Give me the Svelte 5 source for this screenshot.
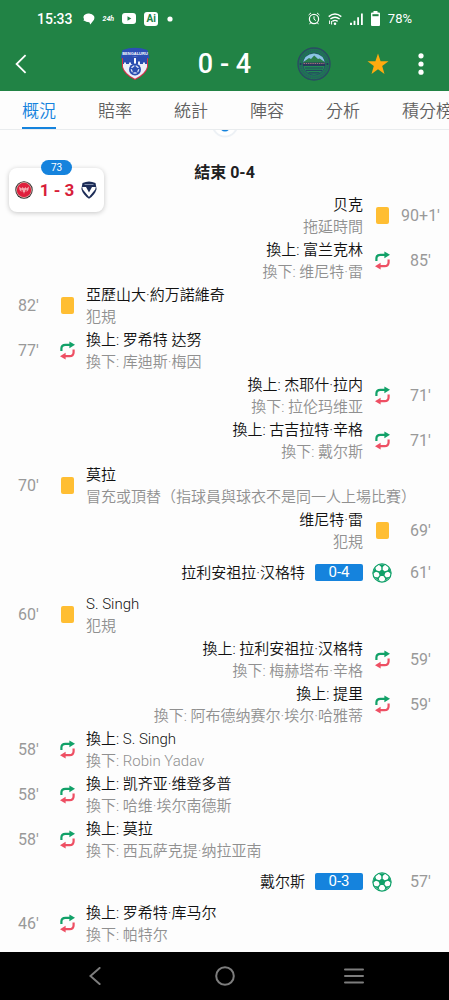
<script lang="ts">
	type EventKind = 'card' | 'sub' | 'goal';

	interface MatchEvent {
		side: 'home' | 'away';
		kind: EventKind;
		time: string;
		title: string;
		detail?: string;
		score?: string;
	}

	const tabs = ['概況', '賠率', '統計', '陣容', '分析', '積分榜'];
	let activeTab = $state('概況');
	let starred = $state(true);

	// newest first
	const events: MatchEvent[] = [
		{side: 'away', kind: 'card', time: "90+1'", title: '贝克', detail: '拖延時間'},
		{side: 'away', kind: 'sub', time: "85'", title: '換上: 富兰克林', detail: '換下: 维尼特·雷'},
		{side: 'home', kind: 'card', time: "82'", title: '亞歷山大·約万諾維奇', detail: '犯規'},
		{side: 'home', kind: 'sub', time: "77'", title: '換上: 罗希特 达努', detail: '換下: 库迪斯·梅因'},
		{side: 'away', kind: 'sub', time: "71'", title: '換上: 杰耶什·拉内', detail: '換下: 拉伦玛维亚'},
		{side: 'away', kind: 'sub', time: "71'", title: '換上: 古吉拉特·辛格', detail: '換下: 戴尔斯'},
		{
			side: 'home',
			kind: 'card',
			time: "70'",
			title: '莫拉',
			detail: '冒充或頂替（指球員與球衣不是同一人上場比賽）',
		},
		{side: 'away', kind: 'card', time: "69'", title: '维尼特·雷', detail: '犯規'},
		{side: 'away', kind: 'goal', time: "61'", title: '拉利安祖拉·汉格特', score: '0-4'},
		{side: 'home', kind: 'card', time: "60'", title: 'S. Singh', detail: '犯規'},
		{side: 'away', kind: 'sub', time: "59'", title: '換上: 拉利安祖拉·汉格特', detail: '換下: 梅赫塔布·辛格'},
		{side: 'away', kind: 'sub', time: "59'", title: '換上: 提里', detail: '換下: 阿布德纳赛尔·埃尔·哈雅蒂'},
		{side: 'home', kind: 'sub', time: "58'", title: '換上: S. Singh', detail: '換下: Robin Yadav'},
		{side: 'home', kind: 'sub', time: "58'", title: '換上: 凯齐亚·维登多普', detail: '換下: 哈维·埃尔南德斯'},
		{side: 'home', kind: 'sub', time: "58'", title: '換上: 莫拉', detail: '換下: 西瓦萨克提·纳拉亚南'},
		{side: 'away', kind: 'goal', time: "57'", title: '戴尔斯', score: '0-3'},
		{side: 'home', kind: 'sub', time: "46'", title: '換上: 罗希特·库马尔', detail: '換下: 帕特尔'},
	];
</script>

{#snippet eventIcon(kind: EventKind)}
	{#if kind === 'card'}
		<svg width="13" height="17" viewBox="0 0 13 17"><rect width="13" height="17" rx="2" fill="#ffbe33" /></svg>
	{:else if kind === 'sub'}
		<svg width="15" height="19" viewBox="0 0 15 19">
			<path d="M1.4 10V7.6Q1.4 3.8 5.4 3.8H10" fill="none" stroke="#12a168" stroke-width="2.2" />
			<path d="M9.4 .4L15 3.7L9.4 7.2Z" fill="#12a168" />
			<path d="M13.6 8.6V11.2Q13.6 15.1 9.6 15.1H5" fill="none" stroke="#ee4f63" stroke-width="2.2" />
			<path d="M5.6 11.7L0 15.2L5.6 18.6Z" fill="#ee4f63" />
		</svg>
	{:else}
		<svg width="20" height="20" viewBox="0 0 20 20">
			<circle cx="10" cy="10" r="9.1" fill="#fff" stroke="#0fa069" stroke-width="1.2" />
			<path
				d="M10 6.8V3M13 9L17 7.7M11.9 12.6L14.3 15.9M8.1 12.6L5.7 15.9M7 9L3 7.7"
				stroke="#0fa069"
				stroke-width="1.4"
			/>
			<g fill="#0fa069">
				<path d="M10 6.3L13.6 8.9L12.2 13.1H7.8L6.4 8.9Z" />
				<path d="M6.4 1.4H13.6L10 4.6Z" />
				<path d="M17 4L19.4 11L15.4 8.2Z" />
				<path d="M18.2 13.8L12 18.8L13.8 14.6Z" />
				<path d="M1.8 13.8L8 18.8L6.2 14.6Z" />
				<path d="M3 4L.6 11L4.6 8.2Z" />
			</g>
		</svg>
	{/if}
{/snippet}

<div class="page">
	<header>
		<div class="status">
			<div class="status-group">
				<span class="clock">15:33</span>
				<svg width="14" height="12" viewBox="-2 0 14 12">
					<path
						d="M5 .5Q9 0 11 3Q12.2 6 9.8 8.2L7.3 11.5L6.3 9.2Q2.5 9.2 1.8 7.8L.6 8L1 6Q-.8 2.4 3 .9Z"
						fill="#fff"
					/>
				</svg>
				<span class="tiny">24h</span>
				<svg width="14" height="11" viewBox="0 0 14 11">
					<rect width="14" height="11" rx="3" fill="#fff" />
					<path d="M5.5 3.2L9.3 5.5L5.5 7.8Z" fill="#218345" />
				</svg>
				<span class="ai">Ai</span>
				<svg width="8" height="6" viewBox="0 0 8 6"><circle cx="4" cy="3" r="2.6" fill="#fff" /></svg>
			</div>
			<div class="status-group right">
				<svg width="12" height="13" viewBox="0 0 12 13" fill="none" stroke="#fff">
					<circle cx="6" cy="7" r="4.6" stroke-width="1.2" />
					<path d="M6 4.2V7.2L7.8 8.6M.6 3L3 .9M11.4 3L9 .9M2.7 10.6L1.6 12.2M9.3 10.6L10.4 12.2" />
				</svg>
				<svg width="14" height="12" viewBox="0 0 14 12" fill="none" stroke="#fff" stroke-width="1.4">
					<path d="M.7 3.6Q7-1.6 13.3 3.6M2.4 6Q7 2.4 11.6 6M4.4 8.4Q7 6.4 9.6 8.4" />
					<circle cx="7" cy="10.7" r=".6" fill="#fff" />
					<path d="M1.6 7.5V11M3.6 8V11.5" stroke-width="1" />
				</svg>
				<svg width="13" height="12" viewBox="0 0 13 12" fill="#fff">
					<path d="M0 9.8H2V12H0ZM3.6 7.8H5.4V12H3.6ZM7.2 4.2H9V12H7.2ZM11 .4H12.8V12H11Z" />
				</svg>
				<svg width="9" height="15" viewBox="0 0 9 15">
					<path d="M2.5 0H6.5V1.6H8Q9 1.6 9 2.6V14Q9 15 8 15H1Q0 15 0 14V2.6Q0 1.6 1 1.6H2.5Z" fill="#fff" />
					<path d="M1.4 3.2H7.6V5.2H1.4Z" fill="#218345" />
				</svg>
				<span>78%</span>
			</div>
		</div>

		<div class="toolbar">
			<button class="back" aria-label="返回">
				<svg width="12" height="20" viewBox="0 0 12 20">
					<path d="M10.6 1.2L1.6 10L10.6 18.8" fill="none" stroke="#fff" stroke-width="1.8" />
				</svg>
			</button>
			<div class="match">
				<svg width="34" height="34" viewBox="0 0 34 34">
					<path d="M4 8H30V20Q28 28 17 33Q6 28 4 20Z" fill="#d8304a" />
					<path d="M5 8H29V20Q27 27 17 31.8Q7 27 5 20Z" fill="#eceffa" />
					<path
						d="M5 10H29V17H27V15.5H25V17H22V14.5H20V17H18V11H16V17H13V15.5H11V17H8V15.5H6V17H5Z"
						fill="#2b4db0"
					/>
					<path d="M4.5 3Q17-1.5 29.5 3L31.5 11.5Q17 8 2.5 11.5Z" fill="#2c4fb5" />
					<path d="M16.2 11.5H17.8V18H16.2Z" fill="#fff" />
					<circle cx="17" cy="22.5" r="6" fill="#2b4db0" />
					<circle cx="17" cy="22.5" r="4.2" fill="#d9e1f6" />
					<path
						d="M17 19.8L19.6 21.7L18.6 24.7H15.4L14.4 21.7ZM17 17V20M12 21L14.5 22M22 21L19.5 22M14 27L15.5 24.5M20 27L18.5 24.5"
						fill="#2b4db0"
						stroke="#2b4db0"
						stroke-width="1.2"
					/>
					<text x="17" y="8" text-anchor="middle" class="crest-text">BENGALURU</text>
				</svg>
				<h1>0 - 4</h1>
				<svg width="34" height="34" viewBox="0 0 34 34">
					<circle cx="17" cy="17" r="16" fill="#1d7a50" stroke="#2a4c63" stroke-width="1.4" />
					<circle cx="17" cy="17" r="13.6" fill="none" stroke="#2b5968" stroke-width="1.6" stroke-dasharray="1.2 1" />
					<circle cx="17" cy="17" r="11.2" fill="#238a55" stroke="#27506a" />
					<path d="M6 17Q7 7.2 17 6.4Q27 7.2 28 17Z" fill="#8cc3e6" />
					<path d="M6.4 15L12 11L14 12L17.2 8.6L21 12L22.8 11.4L27.6 15V17H6.4Z" fill="#2c7d4b" />
					<path d="M6 15.5H28V19H6Z" fill="#28395c" />
					<path d="M6.6 16.5H27.4" stroke="#a66f7b" stroke-dasharray="1.4 .8" />
					<path d="M8 21H26M9 23.4H25M11.5 25.8H22.5" stroke="#22475f" stroke-width="1.2" />
					<circle cx="3.6" cy="17" r="1" fill="#25355c" />
					<circle cx="30.4" cy="17" r="1" fill="#25355c" />
				</svg>
			</div>
			<div class="actions">
				<button aria-label="收藏" aria-pressed={starred} onclick={() => (starred = !starred)}>
					<svg width="22" height="22" viewBox="0 0 22 22">
						<path
							d="M11 .5L13.6 8.2H21.5L15.2 13L17.5 21L11 16.2L4.5 21L6.8 13L.5 8.2H8.4Z"
							fill={starred ? '#ffab0f' : '#fff'}
						/>
					</svg>
				</button>
				<button aria-label="更多">
					<svg width="6" height="22" viewBox="0 0 6 22" fill="#fff">
						<circle cx="3" cy="2.8" r="2.6" />
						<circle cx="3" cy="11" r="2.6" />
						<circle cx="3" cy="19.2" r="2.6" />
					</svg>
				</button>
			</div>
		</div>
	</header>

	<nav class="tabs">
		{#each tabs as tab}
			<button class:active={tab === activeTab} onclick={() => (activeTab = tab)}>{tab}</button>
		{/each}
	</nav>

	<main>
		<!-- scrolled mostly under the tabs -->
		<svg class="marker" width="30" height="8" viewBox="0 0 30 8">
			<circle cx="15" cy="-6" r="12.5" fill="#fff" stroke="#edf1f5" stroke-width="2" />
			<circle cx="15" cy="-4" r="5.5" fill="#1583dd" />
		</svg>

		<aside class="live-card">
			<span class="minute">73</span>
			<svg width="18" height="18" viewBox="0 0 18 18">
				<circle cx="9" cy="9" r="8.7" fill="#2b2527" />
				<circle cx="9" cy="9" r="7.9" fill="#d6b9ae" />
				<circle cx="9" cy="9" r="7.2" fill="#df1f3d" />
				<path
					d="M4 5.5L6.5 7.5L7.5 6L9 7.5L10.5 6L11.5 7.5L14 5.5Q14 9 12 10.5L10.5 10L9 13L7.5 10L6 10.5Q4 9 4 5.5Z"
					fill="#f3a6ad"
				/>
				<path d="M6 9L8 10M12 9L10 10M7.5 12H10.5" stroke="#df1f3d" stroke-width=".8" />
			</svg>
			<strong>1 - 3</strong>
			<svg width="16" height="18" viewBox="0 0 16 18">
				<path d="M1.5 2Q8-1 14.5 2L15.6 8Q14 14 8 17.8Q2 14 .4 8Z" fill="#1c2c57" />
				<path d="M1.2 6H5L8 11.5L11 6H14.8L14.2 8.6L8 16L1.8 8.6Z" fill="#fff" />
				<path d="M3.5 3.5H12.5" stroke="#8390ad" />
			</svg>
		</aside>

		<h2>結束 0-4</h2>

		<ul>
			{#each events as event}
				<li class={[event.side, event.kind]}>
					<span class="time">{event.time}</span>
					<span class="icon">{@render eventIcon(event.kind)}</span>
					<div class="text">
						<span class="title">{event.title}</span>
						{#if event.score}
							<span class="score">{event.score}</span>
						{/if}
						{#if event.detail}
							<span class="detail">{event.detail}</span>
						{/if}
					</div>
				</li>
			{/each}
		</ul>
	</main>

	<footer>
		<button aria-label="上一頁">
			<svg width="12" height="18" viewBox="0 0 12 18">
				<path d="M10.6 1L1.4 9L10.6 17" fill="none" stroke="#7d7d7d" stroke-width="2" stroke-linecap="round" />
			</svg>
		</button>
		<button aria-label="主畫面">
			<svg width="20" height="20" viewBox="0 0 20 20">
				<circle cx="10" cy="10" r="8.8" fill="none" stroke="#7d7d7d" stroke-width="2" />
			</svg>
		</button>
		<button aria-label="最近使用">
			<svg width="20" height="16" viewBox="0 0 20 16">
				<path d="M1 1.5H19M1 8H19M1 14.5H19" stroke="#7d7d7d" stroke-width="2" stroke-linecap="round" />
			</svg>
		</button>
	</footer>
</div>

<style>
	:global(body) {
		margin: 0;
		background: #fdfdfd;
	}
	.page {
		min-height: 100vh;
		display: flex;
		flex-direction: column;
		font-family: Roboto, 'Noto Sans CJK TC', 'Noto Sans CJK SC', sans-serif;
		font-size: 15px;
		color: #202020;
		overflow: hidden;
	}
	svg {
		display: block;
		flex: none;
	}
	button {
		padding: 0;
		border: 0;
		background: none;
		color: inherit;
		font: inherit;
		cursor: pointer;
	}

	header {
		background: #218345;
		color: #fff;
	}
	.status {
		height: 37px;
		padding: 0 37px;
		display: flex;
		align-items: center;
		justify-content: space-between;
		font-size: 13px;
	}
	.status-group {
		display: flex;
		align-items: center;
		gap: 8px;
	}
	.clock {
		font-size: 14px;
		font-weight: 500;
	}
	.tiny {
		font-size: 7px;
		font-weight: 700;
		font-style: italic;
	}
	.ai {
		width: 14px;
		border-radius: 3px;
		background: #fff;
		color: #218345;
		font-size: 10px;
		font-weight: 700;
		line-height: 14px;
		text-align: center;
	}
	.toolbar {
		height: 54px;
		display: grid;
		grid-template-columns: 1fr 214px 1fr;
		align-items: center;
	}
	.back {
		justify-self: start;
		padding: 0 15px;
	}
	.match {
		display: flex;
		align-items: center;
		justify-content: space-between;
	}
	.crest-text {
		font: bold 4px 'Liberation Sans', sans-serif;
		fill: #fff;
	}
	h1 {
		margin: 0;
		font-size: 27px;
		font-weight: 500;
	}
	.actions {
		display: flex;
		justify-content: flex-end;
		gap: 29px;
		padding-right: 25px;
	}

	.tabs {
		height: 38px;
		display: flex;
		gap: 42px;
		padding-left: 22px;
		border-bottom: 1px solid #e9ecee;
		overflow: hidden;
	}
	.tabs button {
		flex: none;
		border-bottom: 2px solid transparent;
		font-size: 17px;
		font-weight: 350;
		color: #606060;
	}
	.tabs .active {
		border-color: #1583dd;
		color: #1583dd;
	}

	main {
		flex: 1;
		position: relative;
	}
	.marker {
		margin: 0 auto;
	}
	.live-card {
		position: absolute;
		top: 38px;
		left: 9px;
		width: 95px;
		height: 44px;
		box-sizing: border-box;
		padding: 0 7px 0 6px;
		display: flex;
		align-items: center;
		justify-content: space-between;
		border-radius: 8px;
		background: #fff;
		box-shadow: 0 1px 5px rgba(0, 0, 0, 0.22);
	}
	.live-card strong {
		font-size: 17px;
		color: #d81e3a;
	}
	.minute {
		position: absolute;
		top: -8px;
		left: 32px;
		width: 31px;
		border-radius: 8px;
		background: #1583dd;
		color: #fff;
		font-size: 10px;
		line-height: 15px;
		text-align: center;
	}
	h2 {
		margin: 24px 0 9px;
		font-size: 16px;
		font-weight: 700;
		line-height: 22px;
		text-align: center;
	}

	ul {
		margin: 0;
		padding: 0;
		list-style: none;
	}
	li {
		min-height: 45px;
		display: flex;
		align-items: center;
	}
	li.away {
		flex-direction: row-reverse;
	}
	li.goal {
		min-height: 39px;
	}
	.time {
		flex: none;
		width: 57px;
		font-size: 16px;
		color: #999;
		text-align: center;
	}
	.icon {
		flex: none;
		width: 20px;
		display: flex;
		justify-content: center;
	}
	.text {
		display: flex;
		flex-direction: column;
		margin: 0 9px;
		font-weight: 350;
		line-height: 22px;
	}
	.away .text {
		text-align: right;
	}
	.goal .text {
		flex-direction: row;
		align-items: center;
		gap: 10px;
	}
	.title {
		color: #111;
	}
	.detail {
		color: #909090;
	}
	.score {
		width: 48px;
		border-radius: 2px;
		background: #1583dd;
		color: #fff;
		font-weight: 400;
		line-height: 17px;
		text-align: center;
	}

	footer {
		height: 48px;
		padding: 0 30px;
		display: flex;
		background: #000;
	}
	footer button {
		flex: 1;
		display: flex;
		align-items: center;
		justify-content: center;
	}
</style>
